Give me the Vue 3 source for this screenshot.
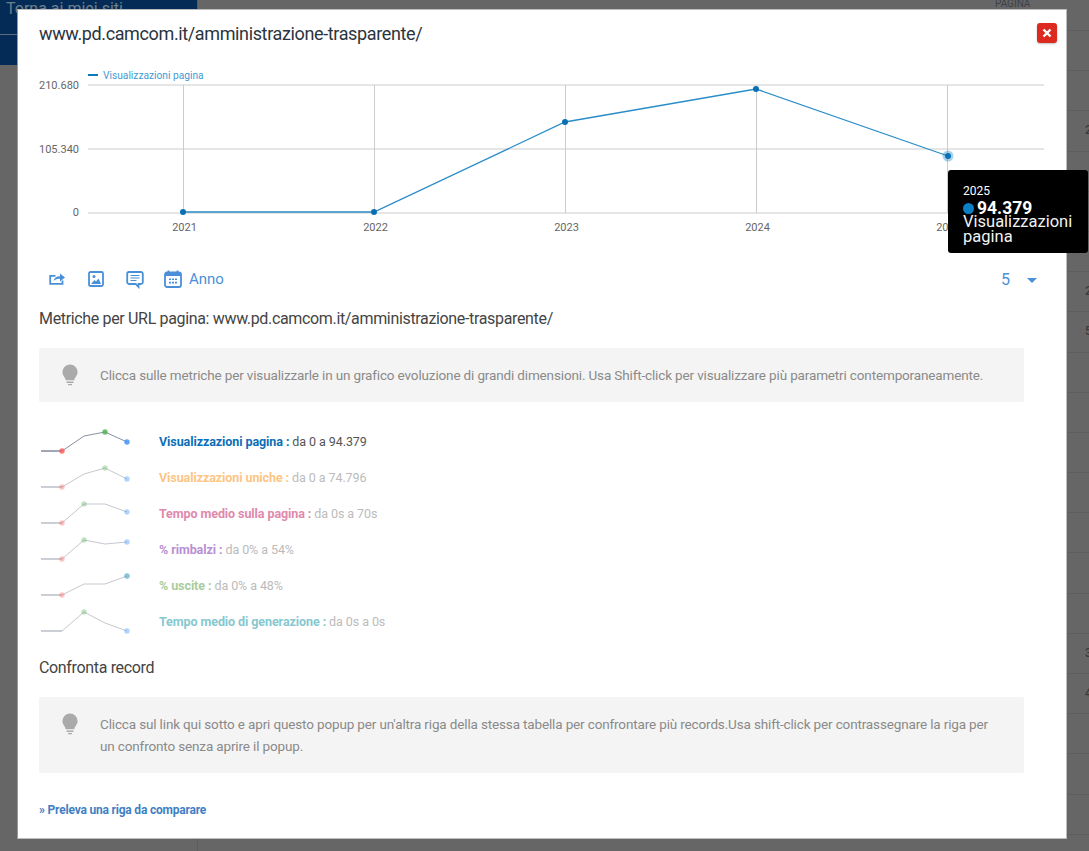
<script setup>
const rowsBg = ['', '', '2', '', '', '', '2', '5', '', '', '', '', '', '', '', '3', '4', '', '', '']
const years = [
  { label: '2021', x: 183 },
  { label: '2022', x: 374 },
  { label: '2023', x: 565 },
  { label: '2024', x: 756 },
  { label: '2025', x: 947 },
]
const yLabels = [
  { label: '210.680', y: 76 },
  { label: '105.340', y: 140 },
  { label: '0', y: 203 },
]
const grid = [76, 140, 204]
const pts = [[166, 203], [357, 203], [548, 113], [739, 80], [931, 147]]
const linePts = pts.map(p => p.join(',')).join(' ')
const xs = [2, 23, 45, 66, 88]
const metrics = [
  { name: 'Visualizzazioni pagina', range: 'da 0 a 94.379', color: '#0a6eb8', dark: true, ys: [10, 10, -5, -9, 1], red: true },
  { name: 'Visualizzazioni uniche', range: 'da 0 a 74.796', color: '#fdc584', ys: [10, 10, -3, -9, 2], red: true },
  { name: 'Tempo medio sulla pagina', range: 'da 0s a 70s', color: '#e089ad', ys: [10, 10, -9, -9, -1], red: true },
  { name: '% rimbalzi', range: 'da 0% a 54%', color: '#b890d4', ys: [10, 10, -9, -5, -7], red: true },
  { name: '% uscite', range: 'da 0% a 48%', color: '#a9cc9c', ys: [10, 10, -1, -1, -9], red: true },
  { name: 'Tempo medio di generazione', range: 'da 0s a 0s', color: '#86c8d0', ys: [10, 10, -9, 2, 10], red: false },
]
const greenIndex = m => m.ys.indexOf(Math.min(...m.ys.slice(2)))
const spark = m => m.ys.map((y, i) => `${xs[i]},${y + 18}`).join(' ')
</script>

<template>
  <div class="page">
    <div class="backdrop">
      <div class="side">
        <div class="brand"><span>Torna ai miei siti</span></div>
      </div>
      <div class="table">
        <div class="thead">PAGINA</div>
        <div v-for="(r, i) in rowsBg" :key="i" class="trow">{{ r }}</div>
      </div>
    </div>

    <section class="modal">
      <header class="head">
        <h2 class="title">www.pd.camcom.it/amministrazione-trasparente/</h2>
        <button class="close" aria-label="Chiudi">
          <svg width="10" height="10" viewBox="0 0 10 10"><path d="M1.5 1.5l7 7M8.500 1.500l-7 7" stroke="#fff" stroke-width="2.400" fill="none" /></svg>
        </button>
      </header>

      <div class="chart">
        <svg class="plot" width="1050" height="240" viewBox="0 0 1050 240">
          <line x1="71" y1="66" x2="81" y2="66" stroke="#0a7abf" stroke-width="2" />
          <text x="86" y="70" class="legend">Visualizzazioni pagina</text>
          <line v-for="g in grid" :key="g" x1="71" :y1="g" x2="1027" :y2="g" stroke="#ccc" />
          <line v-for="y in years" :key="y.x" :x1="y.x - 16.500" y1="76" :x2="y.x - 16.500" y2="204" stroke="#ccc" />
          <text v-for="l in yLabels" :key="l.label" x="62" :y="l.y + 4" text-anchor="end" class="axis">{{ l.label }}</text>
          <text v-for="y in years" :key="y.label" :x="y.x - 15.500" y="222" text-anchor="middle" class="axis">{{ y.label }}</text>
          <polyline :points="linePts" fill="none" stroke="#2a8cc8" stroke-width="1.300" />
          <circle v-for="p in pts.slice(0, 4)" :key="p[0]" :cx="p[0]" :cy="p[1]" r="3" fill="#0a70b5" />
          <circle cx="931" cy="147" r="5.500" fill="#0a7abf" opacity="0.350" />
          <circle cx="931" cy="147" r="3" fill="#0a70b5" />
        </svg>
        <div class="tooltip">
          <div class="tip-year">2025</div>
          <div class="tip-value"><i class="tip-dot"></i><b>94.379</b></div>
          <div class="tip-name">Visualizzazioni pagina</div>
        </div>
      </div>

      <div class="tools">
        <svg class="ic" width="20" height="20" viewBox="0 0 20 20"><path d="M15.500 11.500v3.300H3.200V6.800h5.300" fill="none" stroke="#4a90d9" stroke-width="1.800" /><path d="M6.500 12c.6-3.200 3-4.800 6.500-4.800V4.500l5 4-5 4V9.800c-2.700 0-4.900.5-6.500 2.200z" fill="#4a90d9" /></svg>
        <svg class="ic" width="20" height="20" viewBox="0 0 20 20"><rect x="3" y="3" width="14" height="14" rx="1.500" fill="none" stroke="#4a90d9" stroke-width="1.800" /><circle cx="8" cy="7.500" r="1.500" fill="#4a90d9" /><path d="M5 15l3.500-4 1.500 1.500 2.500-3L15 15z" fill="#4a90d9" /></svg>
        <svg class="ic" width="20" height="20" viewBox="0 0 20 20"><path d="M4 3h12a1.800 1.800 0 0 1 1.800 1.800v8.400A1.800 1.800 0 0 1 16 15h-2.500v3l-2.800-3H4a1.800 1.800 0 0 1-1.800-1.800V4.800A1.800 1.800 0 0 1 4 3z" fill="none" stroke="#4a90d9" stroke-width="1.800" /><path d="M5.500 6.500h9M5.500 9h9M5.500 11.500h6" stroke="#4a90d9" stroke-width="1.200" /></svg>
        <svg class="ic cal" width="20" height="20" viewBox="0 0 20 20"><rect x="2" y="3.500" width="16" height="14.500" rx="2" fill="none" stroke="#4a90d9" stroke-width="1.800" /><path d="M2 3.500h16v3.500H2z" fill="#4a90d9" /><path d="M5.500 1.500v3M14.500 1.500v3" stroke="#4a90d9" stroke-width="1.800" /><path d="M6 9.500h2v1.600H6zM9 9.500h2v1.600H9zM12 9.500h2v1.600h-2zM6 12.800h2v1.600H6zM9 12.800h2v1.600H9zM12 12.800h2v1.600h-2z" fill="#4a90d9" /></svg>
        <span class="period">Anno</span>
        <span class="count">5</span>
        <i class="caret"></i>
      </div>

      <h3 class="sub first">Metriche per URL pagina: www.pd.camcom.it/amministrazione-trasparente/</h3>

      <div class="hint short">
        <svg class="bulb" width="16" height="22" viewBox="0 0 16 22"><path d="M8 .5a7.600 7.600 0 0 0-7.600 7.600c0 3.700 2.800 5 3.300 8.100h8.600c.5-3.100 3.300-4.400 3.300-8.100A7.600 7.600 0 0 0 8 .5z" fill="#aaa" /><path d="M4.500 17.500h7v1.500h-7zM6 20h4v1.200H6z" fill="#aaa" /></svg>
        <p class="hint-text">Clicca sulle metriche per visualizzarle in un grafico evoluzione di grandi dimensioni. Usa Shift-click per visualizzare più parametri contemporaneamente.</p>
      </div>

      <ul class="metrics">
        <li v-for="m in metrics" :key="m.name" class="metric">
          <svg class="spark" width="100" height="36" viewBox="0 0 100 36">
            <polyline :points="spark(m)" fill="none" stroke="#8a90a0" stroke-width="1" :opacity="m.dark ? 1 : 0.5" />
            <polyline :points="`2,${m.ys[0] + 18} 23,${m.ys[1] + 18}`" fill="none" stroke="#8a90a0" stroke-width="2" :opacity="m.dark ? 0.6 : 0.25" />
            <circle v-if="m.red" cx="23" :cy="m.ys[1] + 18" r="2.700" fill="#f55" :opacity="m.dark ? 0.8 : 0.35" />
            <circle :cx="xs[greenIndex(m)]" :cy="m.ys[greenIndex(m)] + 18" r="2.700" fill="#4caf50" :opacity="m.dark ? 0.8 : 0.35" />
            <circle cx="88" :cy="m.ys[4] + 18" r="2.700" fill="#3f96ff" :opacity="m.dark ? 0.85 : 0.4" />
          </svg>
          <span class="m-text"><b :style="{ color: m.color }">{{ m.name }} : </b><span class="m-range">{{ m.range }}</span></span>
        </li>
      </ul>

      <h3 class="sub second">Confronta record</h3>

      <div class="hint tall">
        <svg class="bulb" width="16" height="22" viewBox="0 0 16 22"><path d="M8 .5a7.600 7.600 0 0 0-7.600 7.600c0 3.700 2.800 5 3.300 8.100h8.600c.5-3.100 3.300-4.400 3.300-8.100A7.600 7.600 0 0 0 8 .5z" fill="#aaa" /><path d="M4.500 17.500h7v1.500h-7zM6 20h4v1.200H6z" fill="#aaa" /></svg>
        <p class="hint-text">Clicca sul link qui sotto e apri questo popup per un'altra riga della stessa tabella per confrontare più records.Usa shift-click per contrassegnare la riga per un confronto senza aprire il popup.</p>
      </div>

      <a class="pick">» Preleva una riga da comparare</a>
    </section>
  </div>
</template>

<style>
html, body { margin: 0; background: #666; overflow: hidden; }
</style>

<style scoped>
.page {
  position: relative;
  width: 1089px;
  height: 851px;
  overflow: hidden;
  background: #666;
  font-family: Roboto, "Open Sans", sans-serif;
  color: #444;
}
.backdrop { display: flex; height: 100%; }
.side { width: 198px; box-sizing: border-box; border-right: 1px solid #5c5c5c; flex: none; }
.brand {
  height: 65px;
  box-sizing: border-box;
  color: #6d7f8d;
  font-size: 16px;
  line-height: 20px;
  padding: 0 0 0 6px;
  overflow: hidden;
  background: linear-gradient(#032b55 34px, #5a6b80 34px, #5a6b80 35px, #032b55 35px);
}
.brand span { display: block; margin-top: -1px; }
.table { flex: 1; min-width: 0; color: #3a3a3a; font-size: 12px; }
.thead { height: 31px; box-sizing: border-box; border-bottom: 1px solid #5e5e5e; padding-left: 797px; font-size: 10px; line-height: 8px; color: #3c4048; }
.trow { height: 40.200px; box-sizing: border-box; border-bottom: 1px solid #5e5e5e; padding-left: 887px; line-height: 38px; font-weight: 500; }

.modal {
  position: absolute;
  left: 17px;
  top: 9px;
  width: 1050px;
  height: 830px;
  box-sizing: border-box;
  background: #fff;
  border: 1px solid #bbb;
  border-left-color: #999;
  padding: 0 0 0 21px;
}
.head { position: relative; height: 46px; }
.title { margin: 0; padding-top: 13px; font-size: 18px; line-height: 22px; font-weight: 400; letter-spacing: -.37px; color: #2a3440; }
.close {
  position: absolute;
  right: 9px;
  top: 13px;
  width: 20px;
  height: 20px;
  padding: 0;
  border: 0;
  border-radius: 3px;
  background: #dc2a20;
  box-shadow: 0 1px 2px rgba(0, 0, 0, .25);
  display: flex;
  align-items: center;
  justify-content: center;
}
.chart { position: relative; height: 208px; margin-left: -21px; }
.plot { position: absolute; left: -1px; top: -47px; overflow: visible; }
.plot text { font-family: Roboto, "Open Sans", sans-serif; }
.legend { font-size: 10.200px; fill: #3f9bd5; }
.axis { font-size: 11px; fill: #666; }
.tooltip {
  position: absolute;
  left: 930px;
  top: 114px;
  width: 140px;
  height: 83px;
  box-sizing: border-box;
  background: #000;
  border-radius: 3px;
  padding: 14px 10px 0 15px;
  color: #fff;
}
.tip-year { font-size: 12px; line-height: 14px; }
.tip-value { display: flex; align-items: center; gap: 3px; height: 20px; font-size: 17.500px; }
.tip-dot { width: 11px; height: 11px; border-radius: 50%; background: #0a7fc6; display: block; }
.tip-name { font-size: 16.500px; line-height: 15px; margin-top: -4px; color: #f2f2f2; }

.tools { display: flex; align-items: center; height: 30px; margin-left: -21px; padding-left: 29px; }
.ic { margin-right: 19px; flex: none; }
.ic.cal { margin-right: 6px; margin-left: -1px; }
.period { font-size: 15px; color: #4a90d9; }
.count { margin-left: auto; font-size: 16px; color: #4a90d9; }
.caret {
  margin: 2px 29px 0 17px;
  width: 0;
  height: 0;
  border: 5px solid transparent;
  border-top: 5px solid #4a90d9;
  border-bottom: 0;
}
.sub { margin: 0; font-size: 16px; line-height: 20px; font-weight: 400; letter-spacing: -.34px; color: #444; }
.sub.first { margin-top: 15px; }
.sub.second { margin-top: 19px; }
.hint {
  display: flex;
  box-sizing: border-box;
  width: 985px;
  background: #f4f4f4;
  border-radius: 2px;
  padding-left: 23px;
}
.hint.short { height: 54px; margin-top: 19px; align-items: center; }
.hint.tall { height: 76px; margin-top: 19px; align-items: center; }
.bulb { flex: none; align-self: flex-start; margin-top: 16px; }
.hint-text { margin: 0 0 0 22px; max-width: 898px; font-size: 13.500px; line-height: 22px; letter-spacing: -.146px; color: #8a8a8a; }
.metrics { list-style: none; margin: 21px 0 0; padding: 0; }
.metric { display: flex; align-items: center; height: 36px; }
.spark { flex: none; }
.m-text { margin-left: 20px; font-size: 12.500px; letter-spacing: -.08px; }
.m-range { color: #bbb; }
.metric:first-child .m-range { color: #555; }
.metric b { font-weight: 700; }
.pick { display: block; margin-top: 29px; font-size: 12px; line-height: 16px; font-weight: 700; letter-spacing: -.2px; color: #3f7fc4; }
</style>
